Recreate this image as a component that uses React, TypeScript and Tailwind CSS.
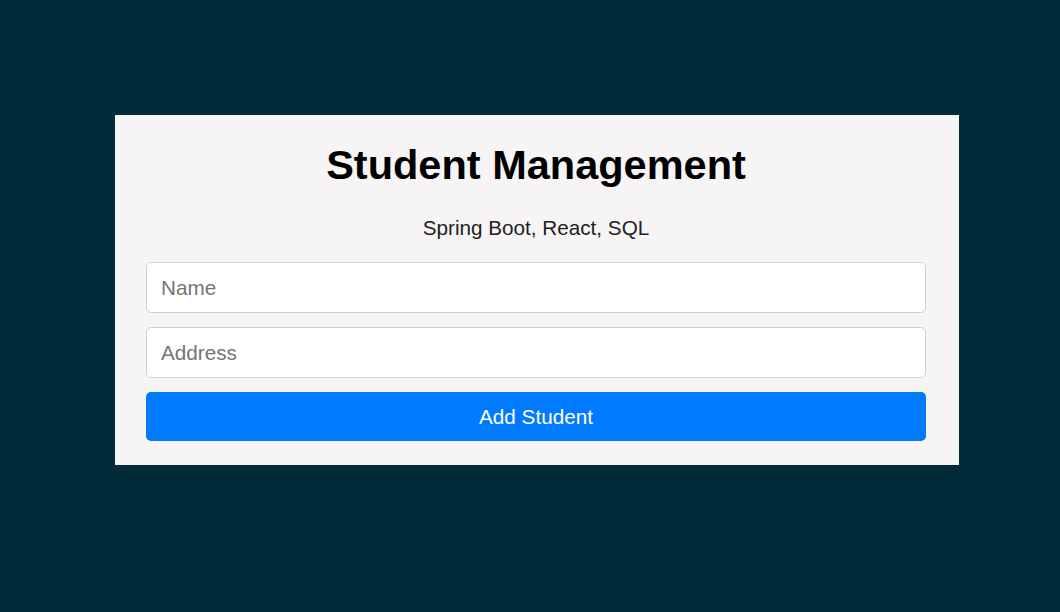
export default function App() {
  return (
    <div className="min-h-[612px] w-full bg-[#012b39] pt-[115px] pl-[115px]" style={{ fontFamily: '"Liberation Sans", Arial, sans-serif' }}>
      <div className="w-[844px] bg-[#f6f4f5] pl-[31px] pr-[33px] pt-[26px] pb-[24px]">
        <h1 className="text-center text-[41.5px] leading-[48px] font-bold text-black">Student Management</h1>
        <p className="mt-[27px] text-center text-[20.7px] leading-[24px] text-[#222]">Spring Boot, React, SQL</p>
        <form className="mt-[22px] flex flex-col gap-[14px]" onSubmit={(e) => e.preventDefault()}>
          <input
            type="text"
            placeholder="Name"
            className="h-[51px] w-full rounded-[5px] border border-[#d0d0d0] bg-white px-[14px] text-[20.7px] text-black placeholder:text-[#757575] outline-none"
          />
          <input
            type="text"
            placeholder="Address"
            className="h-[51px] w-full rounded-[5px] border border-[#d0d0d0] bg-white px-[14px] text-[20.7px] text-black placeholder:text-[#757575] outline-none"
          />
          <button type="submit" className="h-[49px] w-full rounded-[5px] bg-[#007bff] text-[20.7px] text-white">
            Add Student
          </button>
        </form>
      </div>
    </div>
  );
}
